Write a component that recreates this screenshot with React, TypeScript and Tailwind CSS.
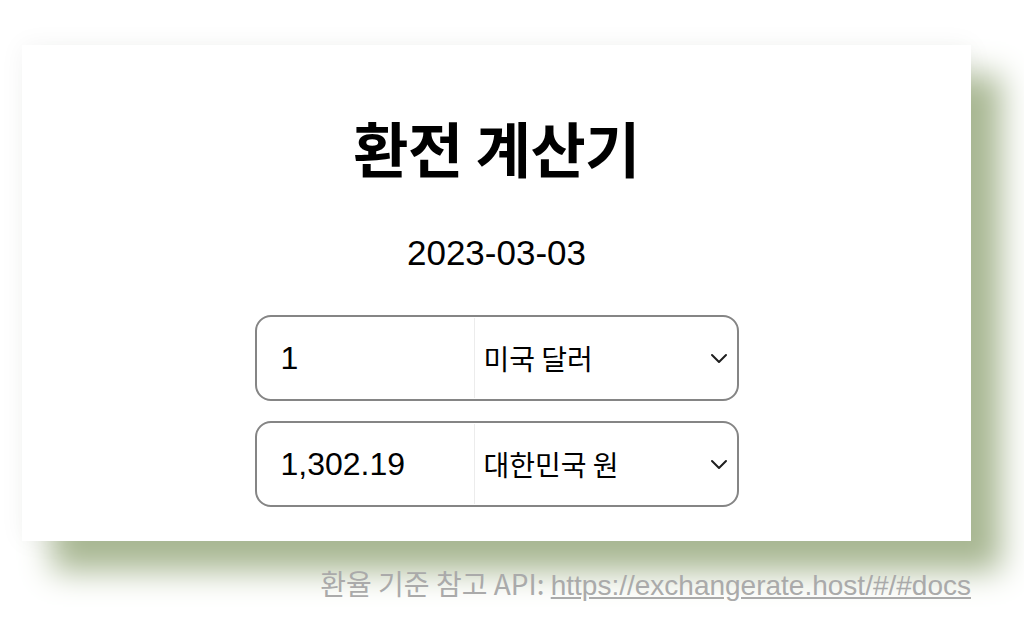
import React from "react";

const latin = { fontFamily: '"Liberation Sans", "Noto Sans CJK KR", sans-serif' };
const korean = { fontFamily: '"Noto Sans CJK KR", "Liberation Sans", sans-serif' };

function Chevron() {
  return (
    <svg width="18" height="11" viewBox="0 0 18 11" fill="none" className="shrink-0 pointer-events-none">
      <path d="M2 2 L9 9 L16 2" stroke="#1f1f1f" strokeWidth="2" strokeLinecap="round" strokeLinejoin="round" />
    </svg>
  );
}

function Row({ amount, currency, options }: { amount: string; currency: string; options: string[] }) {
  return (
    <div className="w-[484px] h-[86px] shrink-0 border-2 border-[#858585] rounded-[16px] flex bg-white overflow-hidden">
      <input
        readOnly
        value={amount}
        className="w-[217px] pl-[24px] bg-transparent outline-none text-[32px] text-black"
        style={latin}
      />
      <div className="w-px bg-[#ececec] my-[1px]" />
      <div className="flex-1 flex items-center pl-[9px] pr-[9px]">
        <select
          value={currency}
          onChange={() => {}}
          className="flex-1 appearance-none bg-transparent outline-none text-[28px] text-black"
          style={korean}
        >
          {options.map((o) => (
            <option key={o} value={o}>
              {o}
            </option>
          ))}
        </select>
        <Chevron />
      </div>
    </div>
  );
}

export default function App() {
  const opts = ["미국 달러", "대한민국 원", "유로", "일본 엔"];
  return (
    <div className="min-h-screen bg-white" style={korean}>
      <div className="pl-[22px] pt-[45px]">
        <div className="w-[949px] h-[496px] bg-white shadow-[30px_30px_30px_#a8b792,0_0_24px_rgba(0,0,0,0.05)] flex flex-col items-center">
          <h1 className="mt-[66px] text-[60px] leading-[72px] font-bold text-black tracking-[-0.5px]" style={korean}>
            환전 계산기
          </h1>
          <p className="mt-[50px] text-[35px] leading-[40px] text-black" style={latin}>
            2023-03-03
          </p>
          <div className="mt-[42px] flex flex-col gap-[20px]">
            <Row amount="1" currency="미국 달러" options={opts} />
            <Row amount="1,302.19" currency="대한민국 원" options={opts} />
          </div>
        </div>
        <p className="w-[949px] mt-[25px] text-right text-[28px] leading-[34px] text-[#aaaaaa]" style={korean}>
          환율 기준 참고 API:{" "}
          <a href="#" className="underline" style={latin}>
            https://exchangerate.host/#/#docs
          </a>
        </p>
      </div>
    </div>
  );
}
